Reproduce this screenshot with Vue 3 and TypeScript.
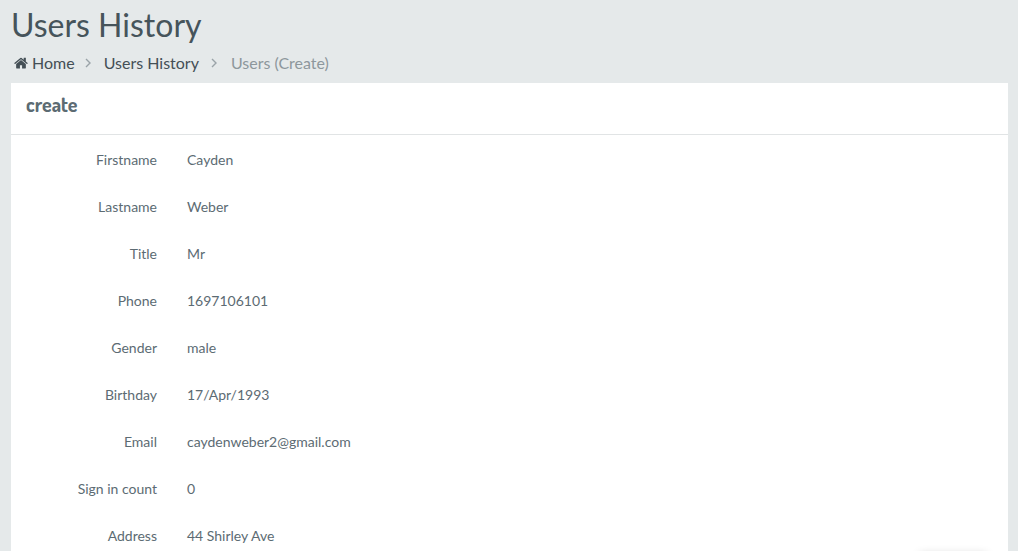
<script setup lang="ts">
interface Field { label: string; value: string }
const fields: Field[] = [
  { label: 'Firstname', value: 'Cayden' },
  { label: 'Lastname', value: 'Weber' },
  { label: 'Title', value: 'Mr' },
  { label: 'Phone', value: '1697106101' },
  { label: 'Gender', value: 'male' },
  { label: 'Birthday', value: '17/Apr/1993' },
  { label: 'Email', value: 'caydenweber2@gmail.com' },
  { label: 'Sign in count', value: '0' },
  { label: 'Address', value: '44 Shirley Ave' },
]
</script>

<template>
  <main class="page">
    <h1>Users History</h1>
    <nav aria-label="Breadcrumb">
      <ol class="crumbs">
        <li>
          <a href="#" class="home">
            <svg class="house" viewBox="0 0 1664 1312" aria-hidden="true">
              <path transform="translate(0 -96)" d="M1408 864v480q0 26-19 45t-45 19H960v-384H704v384H320q-26 0-45-19t-19-45V864q0-1 .5-3t.5-3l575-474 575 474q1 2 1 6zm223-69-62 74q-8 9-21 11h-3q-13 0-21-7L832 296 140 873q-12 8-24 7-13-2-21-11l-62-74q-8-10-7-23.500t11-21.500l719-599q32-26 76-26t76 26l244 204V160q0-14 9-23t23-9h192q14 0 23 9t9 23v408l219 182q10 8 11 21.500t-7 23.500z" />
            </svg>
            Home
          </a>
        </li>
        <li>
          <svg class="chev" viewBox="0 0 6 10" aria-hidden="true"><path d="M1 1l4 4-4 4" /></svg>
          <a href="#">Users History</a>
        </li>
        <li class="current" aria-current="page">
          <svg class="chev" viewBox="0 0 6 10" aria-hidden="true"><path d="M1 1l4 4-4 4" /></svg>
          Users (Create)
        </li>
      </ol>
    </nav>
    <section class="panel">
      <h2>create</h2>
      <dl>
        <div v-for="f in fields" :key="f.label" class="row">
          <dt>{{ f.label }}</dt>
          <dd>{{ f.value }}</dd>
        </div>
      </dl>
    </section>
    <div class="dock" aria-hidden="true"></div>
  </main>
</template>

<style>
html, body { background: #e5e9ea; }
</style>
<style scoped>
.page { box-sizing: border-box; display: flex; flex-direction: column; min-height: 100vh; padding: 4px 10px 0 11px; font-family: Lato, sans-serif; color: #5c6b73; }
h1 { margin: 0; font-size: 32px; line-height: 42px; font-weight: 400; color: #46545b; }
.crumbs { display: flex; margin: 0; padding: 5px 3px 9px; list-style: none; font-size: 16px; line-height: 23px; }
.crumbs li { display: flex; align-items: center; }
.crumbs a { color: #444f56; text-decoration: none; }
.home { display: flex; align-items: center; gap: 4px; }
.house { width: 14px; height: 12px; fill: currentColor; }
.chev { width: 6px; height: 10px; margin: 0 13px 0 10px; fill: none; stroke: #9aa3a8; stroke-width: 1.4; }
.current { color: #8d979c; }
.current .chev { margin: 0 14px 0 12px; }
.panel { flex: 1; background: #fff; }
h2 { margin: 0; padding: 9px 15px 18px; border-bottom: 1px solid #e1e4e5; font-family: Dosis, Lato, sans-serif; font-size: 20px; line-height: 24px; font-weight: 700; }
dl { display: grid; row-gap: 27px; margin: 0; padding: 15px 0 0; font-size: 14px; line-height: 20px; }
.row { display: grid; grid-template-columns: 146px 1fr; column-gap: 30px; }
dt { text-align: right; }
dd { margin: 0; }
.dock { position: fixed; right: 32px; bottom: -24px; width: 66px; height: 20px; box-shadow: 0 0 10px rgba(0, 0, 0, 0.25); }
</style>
